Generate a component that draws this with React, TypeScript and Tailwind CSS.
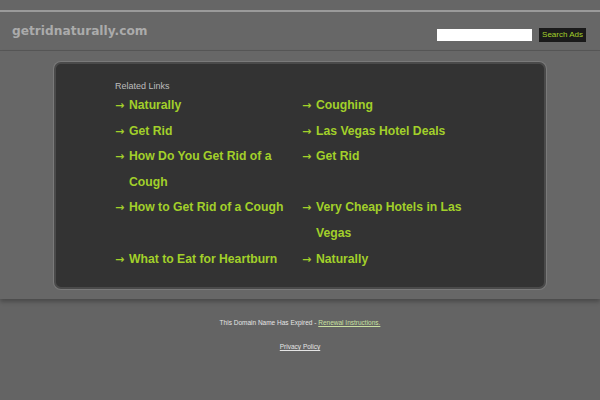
const links: [string, string][] = [
  ['Naturally', 'Coughing'],
  ['Get Rid', 'Las Vegas Hotel Deals'],
  ['How Do You Get Rid of a Cough', 'Get Rid'],
  ['How to Get Rid of a Cough', 'Very Cheap Hotels in Las Vegas'],
  ['What to Eat for Heartburn', 'Naturally'],
]

function LinkItem({ label }: { label: string }) {
  return (
    <li className="flex">
      <span className="w-[14px] shrink-0 font-['DejaVu_Sans',sans-serif] text-[11px]">→</span>
      <a href="#" className="max-w-[173px] text-[#a2d02a]">
        {label}
      </a>
    </li>
  )
}

export default function App() {
  return (
    <div className="min-h-[400px] bg-[#646464] font-['Liberation_Sans',Arial,sans-serif]">
      {/* top strip */}
      <div className="h-[12px] bg-[#666666] border-b-2 border-[#9a9a9a]" />

      {/* header */}
      <header className="h-[39px] flex items-center justify-between pl-3 pr-[14px] bg-[#676767] border-b border-[#575757]">
        <span className="font-['DejaVu_Sans',Verdana,sans-serif] font-bold text-[12.2px] text-[#ababab]">
          getridnaturally.com
        </span>
        <div className="flex items-center gap-[7px] mt-[7px]">
          <input className="w-[95px] h-[12px] bg-white border-0 outline-none" />
          <button className="h-[14px] px-[3px] bg-[#1a1a1a] text-[#a2d02a] text-[8px] leading-[14px]">
            Search Ads
          </button>
        </div>
      </header>

      {/* related links panel */}
      <section className="bg-[#676767] pt-[11px] pb-[10px] shadow-[0_3px_4px_rgba(0,0,0,0.25)] relative">
        <div className="mx-[54px] rounded-[7px] bg-[#333333] border-2 border-[#4a4a4a] ring-1 ring-[#7a7a7a] pt-[16px] pb-[15px] pl-[59px]">
          <div className="text-[9px] leading-[13px] text-[#bdbdbd]">Related Links</div>
          <ul className="w-[374px] grid grid-cols-2 text-[12.2px] leading-[25.6px] font-bold text-[#a2d02a]">
            {links.map(([a, b]) => (
              <>
                <LinkItem key={a + '1'} label={a} />
                <LinkItem key={b + '2'} label={b} />
              </>
            ))}
          </ul>
        </div>
      </section>

      {/* footer */}
      <footer className="pt-[19px] text-center text-[6.5px] text-[#e4e4e4]">
        <p className="leading-[9px]">
          This Domain Name Has Expired -{' '}
          <a href="#" className="underline text-[#c9e0a0]">
            Renewal Instructions.
          </a>
        </p>
        <p className="mt-[15px] leading-[9px]">
          <a href="#" className="underline">
            Privacy Policy
          </a>
        </p>
      </footer>
    </div>
  )
}
